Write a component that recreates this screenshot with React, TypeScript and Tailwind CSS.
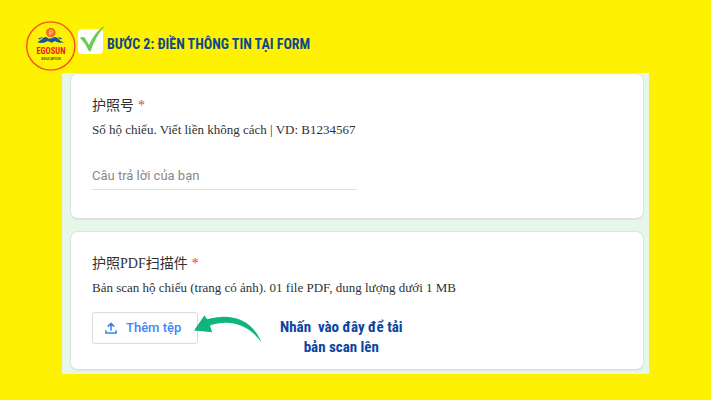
import type { ReactNode } from 'react';

function Logo() {
  return (
    <svg viewBox="0 0 50 50" className="size-[50px] shrink-0" role="img" aria-label="Egosun Education">
      <circle cx="24.800" cy="25" r="24.1" fill="#fff200" stroke="#f4511e" strokeWidth="1.4" />
      <circle cx="24.800" cy="11.600" r="4.900" fill="#f4701f" />
      <path
        d="M23.800 14.600v-4.400c0-1.200 2.800-1.200 2.800.6 0 1.400-1.600 1.600-2.600 1.400"
        fill="none"
        stroke="#fbe0b0"
        strokeWidth="0.9"
      />
      <path d="M11 21c3.600-.4 5.600-4.800 8.600-5 1.800 0 2.600 2 4.400 1.800 2.400-.4 4-2.400 6-1.600 3 1.400 4.400 5 8.600 4.800-3.800 1.400-7 .6-9.600-1l-3.400 1.800-3.800-1.800c-3.200 2-6.800 2.600-10.800 1z" fill="#17549c" />
      <path d="M12 17.600l5-1.800-3.200 2.600zM31.500 15.400l5.500 2.600-3.200.2z" fill="#17549c" />
      <text x="24.900" y="33.200" textAnchor="middle" fontSize="8.500" fontWeight="700" fill="#e5231b" className="font-['Roboto_Condensed','Liberation_Sans',sans-serif]">
        EGOSUN
      </text>
      <text x="25" y="38.800" textAnchor="middle" fontSize="3.300" fontWeight="700" fill="#3b4a3a" className="font-['Liberation_Sans',sans-serif]">
        EDUCATION
      </text>
    </svg>
  );
}

function CheckMark() {
  return (
    <svg viewBox="0 0 28 30" className="h-[30px] w-7 shrink-0" aria-hidden="true">
      <rect x="0" y="4" width="25" height="25" rx="4" fill="#fff" />
      <path d="M2 13.500c1.200-1.700 3.900-1.900 5-.4l4 6.900C14.300 12.500 19.500 4.500 27 0.700 21 7.500 15.800 16 12.600 26.300h-1.600C8.500 21.500 6 16 2 13.500z" fill="#6ccb55" />
    </svg>
  );
}

function UploadIcon() {
  return (
    <svg viewBox="0 0 12 12" className="size-3" fill="none" stroke="#3b82f0" strokeWidth="1.500" aria-hidden="true">
      <path d="M6 8.800V1.600M2.700 4.600L6 1.300l3.300 3.300M0.900 8.200v2.900h10.200V8.200" />
    </svg>
  );
}

function CurvedArrow() {
  return (
    <svg viewBox="0 0 70 30" className="relative z-10 -ml-1 mt-0.5 h-[30px] w-[70px] shrink-0" aria-hidden="true">
      <path d="M0 16.500L10.500 1.200l2.500 4C35-1 57 3 67.500 28.500 55 10.500 35 5 16 11.500l2.200 6.700z" fill="#0fb57d" />
    </svg>
  );
}

function Card({ children }: { children: ReactNode }) {
  return (
    <section className="rounded-lg border border-b-2 border-[#dde3e5] bg-white px-[21px] pt-5">
      {children}
    </section>
  );
}

function Required() {
  return <span className="ml-1 text-[#e0463c]">*</span>;
}

export default function App() {
  return (
    <main className="min-h-screen bg-[#fff200] pb-[26px] font-['Liberation_Serif','Noto_Sans_CJK_SC',serif] text-[#303134]">
      <header className="flex pl-[26px] pt-[21px]">
        <Logo />
        <div className="ml-0.5 mt-1 flex h-[30px] items-center">
          <CheckMark />
          <h1 className="ml-px mt-2 whitespace-nowrap font-['Roboto_Condensed','Liberation_Sans',sans-serif] text-sm leading-5 font-bold text-[#0b4a8f]">
            BƯỚC 2: ĐIỀN THÔNG TIN TẠI FORM
          </h1>
        </div>
      </header>

      <form className="mx-[62px] mt-0.5 flex flex-col gap-[11px] bg-[#e6f7e9] pr-[5px] pb-[3px] pl-2">
        <Card>
          <label htmlFor="passport" className="block text-[14px] leading-6">
            护照号
            <Required />
          </label>
          <p className="mt-0.5 text-[13px] leading-5">Số hộ chiếu. Viết liền không cách | VD: B1234567</p>
          <input
            id="passport"
            type="text"
            placeholder="Câu trả lời của bạn"
            className="mt-5 mb-7 block h-[30px] w-1/2 border-b border-[#dcdfe2] pt-0.5 font-['Roboto',sans-serif] text-[13px] outline-none placeholder:text-[#85888c]"
          />
        </Card>

        <Card>
          <h2 className="text-[14px] leading-6">
            护照PDF扫描件
            <Required />
          </h2>
          <p className="mt-0.5 text-[13px] leading-5">
            Bản scan hộ chiếu (trang có ảnh). 01 file PDF, dung lượng dưới 1 MB
          </p>
          <div className="mt-3.5 flex pb-3">
            <button
              type="button"
              className="flex h-8 w-[106px] shrink-0 items-center gap-[9px] rounded-[3px] border border-[#dadce0] pl-3 font-['Roboto',sans-serif] text-[13px] font-medium text-[#4285f4]"
            >
              <UploadIcon />
              Thêm tệp
            </button>
            <CurvedArrow />
            <p className="ml-4 mt-[5px] whitespace-pre text-center font-['Roboto_Condensed','Liberation_Sans',sans-serif] text-[15px] leading-5 font-bold text-[#0b45a0]">
              {'Nhấn  vào đây để tải\nbản scan lên'}
            </p>
          </div>
        </Card>
      </form>
    </main>
  );
}
